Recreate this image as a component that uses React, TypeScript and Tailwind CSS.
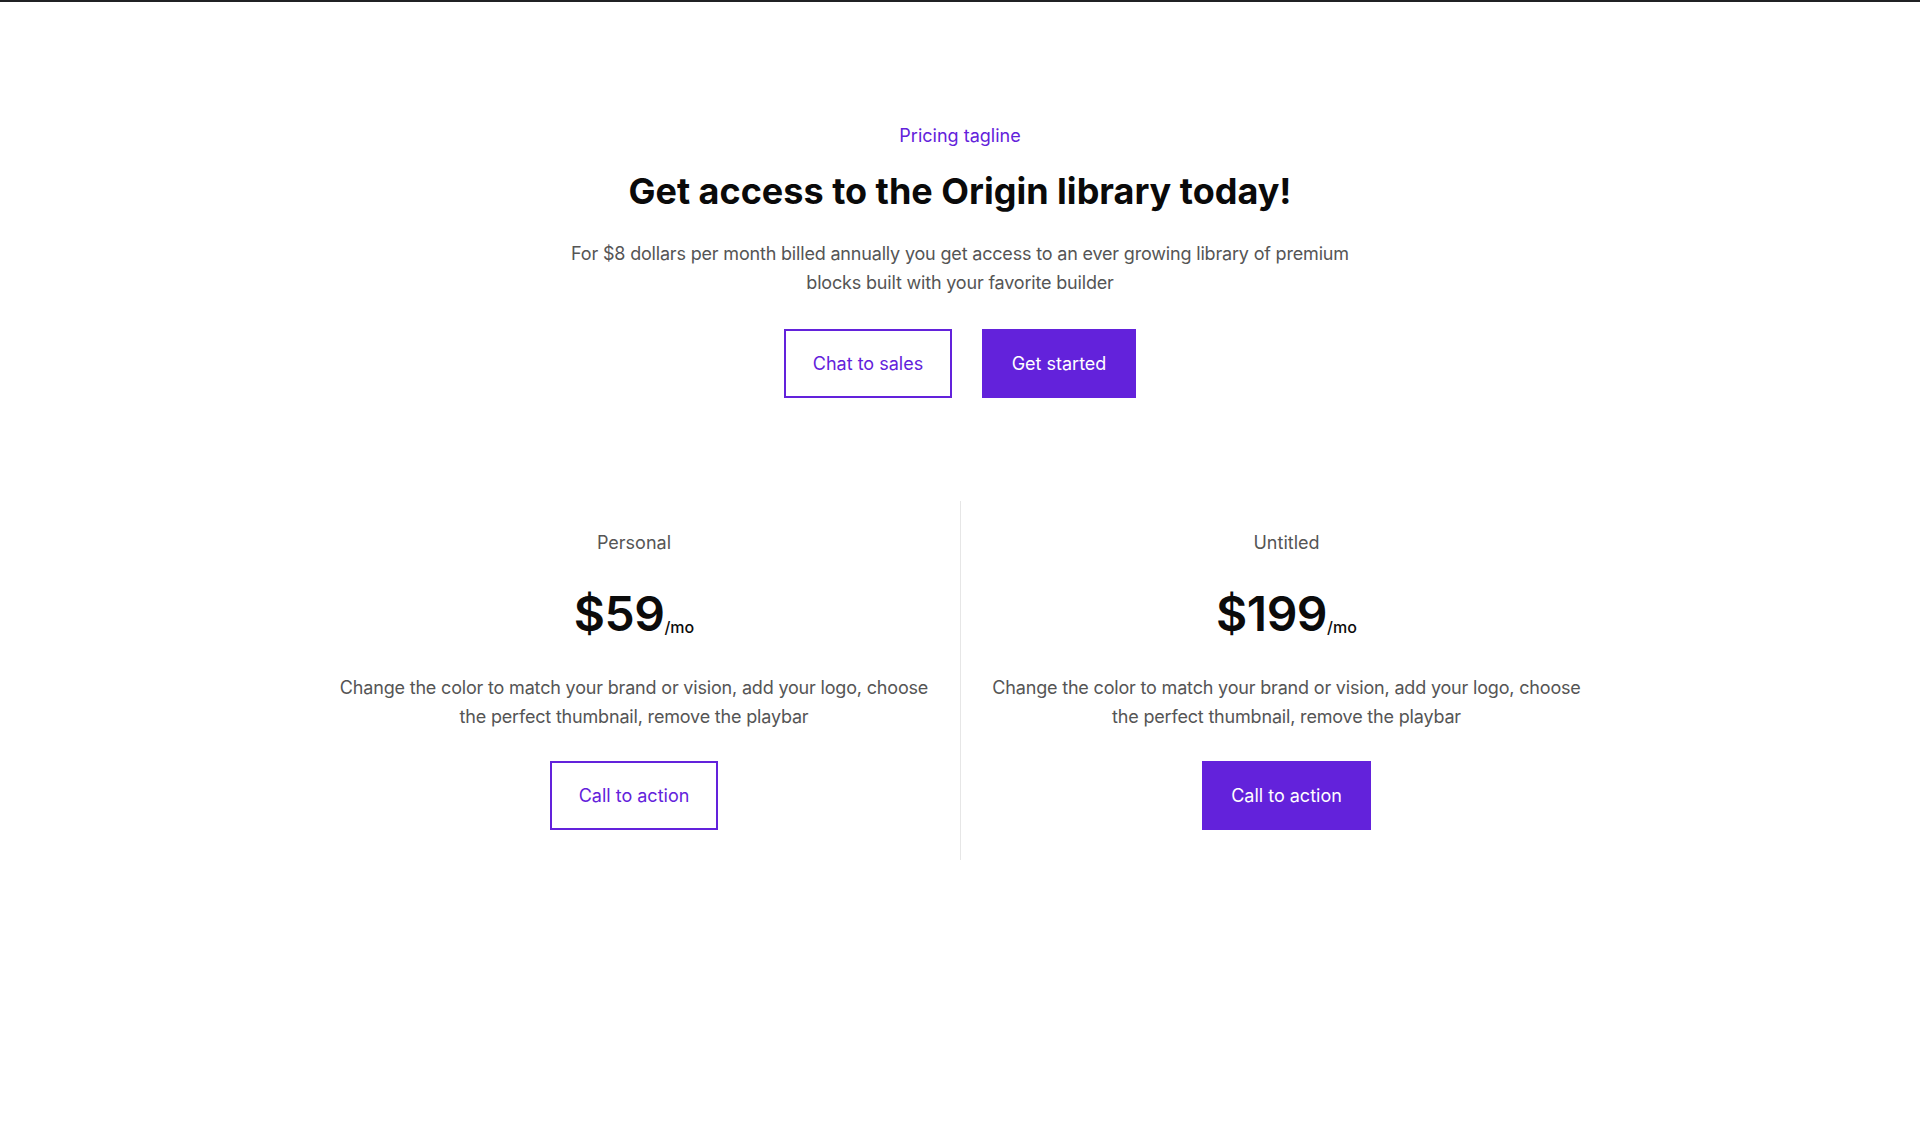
import React from "react";

const font = { fontFamily: "Inter, 'Noto Sans', sans-serif" };

function PlanColumn({
  name,
  price,
  filled,
  bordered,
}: {
  name: string;
  price: string;
  filled?: boolean;
  bordered?: boolean;
}) {
  return (
    <div
      className={
        bordered
          ? "flex flex-col items-center border-l border-[#e6e6e6] pt-7 pb-[30px]"
          : "flex flex-col items-center pt-7 pb-[30px]"
      }
    >
      <div className="text-[18px] leading-[27px] text-[#555555]">{name}</div>
      <div className="mt-[34px] flex items-end text-[#0b0b0b]">
        <span className="text-[48px] font-semibold leading-[48px] tracking-[-0.01em]">{price}</span>
        <span className="mb-[1px] text-[16px] font-medium leading-[20px]">/mo</span>
      </div>
      <p className="mt-[35px] w-[600px] text-center text-[18px] leading-[29.25px] tracking-[-0.01em] text-[#555555]">
        Change the color to match your brand or vision, add your logo, choose the perfect thumbnail, remove the playbar
      </p>
      <button
        className={
          filled
            ? "mt-[30px] flex h-[69px] w-[169px] items-center justify-center border-2 border-[#6322db] bg-[#6322db] text-[18px] text-white"
            : "mt-[30px] flex h-[69px] w-[168px] items-center justify-center border-2 border-[#6322db] bg-white text-[18px] text-[#6322db]"
        }
      >
        Call to action
      </button>
    </div>
  );
}

export default function App() {
  return (
    <div className="min-h-[1140px] w-full bg-white" style={font}>
      <div className="h-[2px] w-full bg-[#202124]" />
      <section className="flex flex-col items-center pt-[120px]">
        <div className="text-[18px] leading-[27px] text-[#6322db]">Pricing tagline</div>
        <h1 className="mt-5 text-[36px] font-bold leading-[44px] text-[#0a0a0a]">
          Get access to the Origin library today!
        </h1>
        <p className="mt-[26px] w-[800px] text-center text-[18px] leading-[29.25px] tracking-[-0.01em] text-[#555555]">
          For $8 dollars per month billed annually you get access to an ever growing library of premium blocks built
          with your favorite builder
        </p>
        <div className="mt-[31px] flex gap-[30px]">
          <button className="flex h-[69px] w-[168px] items-center justify-center border-2 border-[#6322db] bg-white text-[18px] text-[#6322db]">
            Chat to sales
          </button>
          <button className="flex h-[69px] w-[154px] items-center justify-center border-2 border-[#6322db] bg-[#6322db] text-[18px] text-white">
            Get started
          </button>
        </div>
        <div className="mt-[103px] grid w-[1304px] grid-cols-2">
          <PlanColumn name="Personal" price="$59" />
          <PlanColumn name="Untitled" price="$199" filled bordered />
        </div>
      </section>
    </div>
  );
}
